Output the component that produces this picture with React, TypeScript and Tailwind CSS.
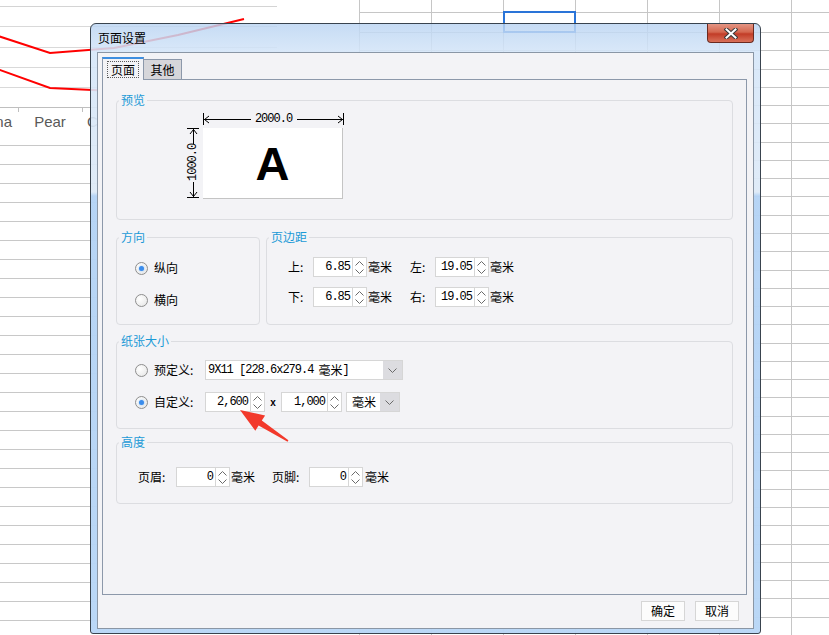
import React from 'react'

const mono = "font-['Liberation_Mono',monospace] tracking-[-1px]"

function Backdrop() {
  const chartRows = [26, 47, 67, 87]
  const leftRows = Array.from({ length: 26 }, (_, i) => 145 + i * 19)
  const sheetRows = [12, ...Array.from({ length: 34 }, (_, i) => Math.round(32 + i * 18.27))]
  const sheetCols = [359, 431, 503, 575, 647, 719, 791]
  return (
    <svg className="absolute inset-0" width="829" height="635">
      <line x1="0" x2="277" y1="6.5" y2="6.5" stroke="#d4d4d4" />
      {chartRows.map((y) => (
        <line key={y} x1="0" x2="277" y1={y + 0.5} y2={y + 0.5} stroke="#d9d9d9" />
      ))}
      <line x1="0" x2="277" y1="107.5" y2="107.5" stroke="#bfbfbf" />
      {[18, 82, 146, 210].map((x) => (
        <line key={x} x1={x + 0.5} x2={x + 0.5} y1="107" y2="112" stroke="#bfbfbf" />
      ))}
      {leftRows.map((y) => (
        <line key={y} x1="0" x2="359" y1={y + 0.5} y2={y + 0.5} stroke="#c8c8c8" />
      ))}
      {sheetRows.map((y) => (
        <line key={y} x1="359" x2="829" y1={y + 0.5} y2={y + 0.5} stroke="#c6c6c6" />
      ))}
      {sheetCols.map((x) => (
        <line key={x} x1={x + 0.5} x2={x + 0.5} y1="0" y2="635" stroke="#c6c6c6" />
      ))}
      <rect x="504" y="12" width="71" height="20" fill="none" stroke="#2a74d8" strokeWidth="2" />
      <polyline points="-14,32 50,53 114,48 178,35 244,19" fill="none" stroke="#f00" strokeWidth="2" />
      <polyline points="-14,65 50,88 114,91" fill="none" stroke="#f00" strokeWidth="2" />
      <g fontFamily="Liberation Sans, sans-serif" fontSize="15" fill="#595959">
        <text x="12" y="127" textAnchor="end">Banana</text>
        <text x="50" y="127" textAnchor="middle">Pear</text>
        <text x="87" y="127">Cherry</text>
      </g>
    </svg>
  )
}

function ChevUp() {
  return (
    <svg width="9" height="5" viewBox="0 0 9 5">
      <path d="M0.5 4.5 L4.5 0.5 L8.5 4.5" fill="none" stroke="#6a6a6a" />
    </svg>
  )
}

function ChevDown() {
  return (
    <svg width="9" height="5" viewBox="0 0 9 5">
      <path d="M0.5 0.5 L4.5 4.5 L8.5 0.5" fill="none" stroke="#6a6a6a" />
    </svg>
  )
}

function Spin({ value, w }: { value: string; w: string }) {
  return (
    <div className="flex h-[20px]">
      <div className={`${w} border border-[#d6d6d6] bg-white flex items-center justify-end pr-[2px] text-[12px] ${mono}`}>
        {value}
      </div>
      <div className="w-[14px] border border-l-0 border-[#d6d6d6] bg-white flex flex-col items-center justify-center gap-[3px]">
        <ChevUp />
        <ChevDown />
      </div>
    </div>
  )
}

function Radio({ checked }: { checked?: boolean }) {
  return (
    <span className="w-[13px] h-[13px] rounded-full border border-[#8e8e8e] bg-[radial-gradient(circle_at_35%_35%,#ffffff,#e4e4e4)] flex items-center justify-center shrink-0">
      {checked && <span className="w-[5px] h-[5px] rounded-full bg-[#3b8ceb] shadow-[0_0_2px_#7fb8f5]" />}
    </span>
  )
}

function Group({ title, className, children }: { title: string; className: string; children?: React.ReactNode }) {
  return (
    <fieldset className={`rounded-[4px] border border-[#dcdde1] ${className}`}>
      <legend className="ml-[2px] px-[2px] text-[12px] leading-[16px] text-[#1b9ad6]">{title}</legend>
      {children}
    </fieldset>
  )
}

function Preview() {
  return (
    <div className="ml-[70px] mt-[5px] flex flex-col">
      <div className="ml-[16px] flex h-[15px] items-start">
        <svg width="50" height="13">
          <line x1="0.5" x2="0.5" y1="0" y2="12" stroke="#000" />
          <line x1="1" x2="48" y1="6.5" y2="6.5" stroke="#000" />
          <path d="M6 3 L1.5 6.5 L6 10" fill="none" stroke="#000" />
        </svg>
        <span className={`w-[41px] text-center text-[12px] leading-[13px] ${mono}`}>2000.0</span>
        <svg width="50" height="13">
          <line x1="3" x2="49" y1="6.5" y2="6.5" stroke="#000" />
          <line x1="49.5" x2="49.5" y1="0" y2="12" stroke="#000" />
          <path d="M44 3 L48.5 6.5 L44 10" fill="none" stroke="#000" />
        </svg>
      </div>
      <div className="flex">
        <div className="w-[12px] h-[70px] mr-[4px] flex flex-col items-center">
          <svg width="12" height="17">
            <line x1="0" x2="12" y1="0.5" y2="0.5" stroke="#000" />
            <line x1="6.5" x2="6.5" y1="1" y2="16" stroke="#000" />
            <path d="M3 6 L6.5 1.5 L10 6" fill="none" stroke="#000" />
          </svg>
          <span className={`h-[36px] text-[12px] leading-[12px] text-center [writing-mode:vertical-rl] rotate-180 ${mono}`}>1000.0</span>
          <svg width="12" height="17">
            <line x1="6.5" x2="6.5" y1="1" y2="16" stroke="#000" />
            <path d="M3 11 L6.5 15.5 L10 11" fill="none" stroke="#000" />
            <line x1="0" x2="12" y1="16.5" y2="16.5" stroke="#000" />
          </svg>
        </div>
        <div className="w-[140px] h-[71px] bg-white border-r border-b border-[#c4c4c4] flex items-center justify-center">
          <span className="font-['Liberation_Sans',sans-serif] font-bold text-[47px] leading-none">A</span>
        </div>
      </div>
    </div>
  )
}

function Dialog() {
  return (
    <div className="absolute left-[90px] top-[23px] w-[671px] h-[611px] flex flex-col border border-[#39434e] rounded-t-[6px] rounded-b-[3px] bg-[linear-gradient(180deg,rgba(186,212,242,0.82)_0px,rgba(212,229,248,0.88)_28px,rgba(222,234,247,0.95)_168px,rgba(180,211,245,0.97)_172px,rgba(184,214,246,0.97)_100%)]">
      <div className="h-[28px] flex shrink-0">
        <div className="pl-[7px] flex items-center text-[12px]">页面设置</div>
        <div className="ml-auto mr-[6px] w-[47px] h-[19px] rounded-b-[4px] border border-t-0 border-[#6b2a20] bg-[linear-gradient(180deg,#e49584_0%,#d4674f_45%,#c23c27_55%,#d9715a_100%)] flex items-center justify-center">
          <svg width="14" height="11" viewBox="0 0 14 11">
            <path d="M2.5 1.5 L11.5 9.5 M11.5 1.5 L2.5 9.5" stroke="#3a3a3a" strokeWidth="4" strokeLinecap="square" />
            <path d="M2.5 1.5 L11.5 9.5 M11.5 1.5 L2.5 9.5" stroke="#fff" strokeWidth="2" strokeLinecap="square" />
          </svg>
        </div>
      </div>
      <div className="ml-[6px] w-[657px] h-[577px] border border-[#8a96a5] bg-[#f3f3f6] flex flex-col pl-[4px] pt-[4px]">
        <div className="flex items-end h-[22px]">
          <div className="relative z-10 -mb-px h-[23px] w-[42px] border border-b-0 border-[#8c98aa] border-t-2 border-t-[#3d8ee0] bg-[#f3f3f6] flex items-center justify-center">
            <span className="border border-dotted border-[#5a5a5a] px-[3px] leading-[15px] text-[12px]">页面</span>
          </div>
          <div className="h-[20px] w-[38px] border border-b-0 border-l-0 border-[#8c98aa] bg-[#d6d6da] flex items-center justify-center text-[12px]">
            其他
          </div>
        </div>
        <div className="w-[645px] h-[516px] border border-[#8c98aa] bg-[#f3f3f6] px-[13px] flex flex-col">
          <Group title="预览" className="mt-[12px] h-[128px]">
            <Preview />
          </Group>
          <div className="mt-[9px] flex gap-[6px]">
            <Group title="方向" className="w-[144px] h-[96px]">
              <div className="pl-[18px] pt-[13px] flex flex-col gap-[12px]">
                <div className="h-[20px] flex items-center gap-[6px]">
                  <Radio checked />
                  <span>纵向</span>
                </div>
                <div className="h-[20px] flex items-center gap-[6px]">
                  <Radio />
                  <span>横向</span>
                </div>
              </div>
            </Group>
            <Group title="页边距" className="flex-1 h-[96px]">
              <div className="pl-[21px] pt-[12px] flex flex-col gap-[10px]">
                <div className="flex items-center">
                  <span className="w-[25px]">上:</span>
                  <Spin value="6.85" w="w-[40px]" />
                  <span className="ml-[1px] w-[26px]">毫米</span>
                  <span className="ml-[16px] w-[25px]">左:</span>
                  <Spin value="19.05" w="w-[40px]" />
                  <span className="ml-[1px]">毫米</span>
                </div>
                <div className="flex items-center">
                  <span className="w-[25px]">下:</span>
                  <Spin value="6.85" w="w-[40px]" />
                  <span className="ml-[1px] w-[26px]">毫米</span>
                  <span className="ml-[16px] w-[25px]">右:</span>
                  <Spin value="19.05" w="w-[40px]" />
                  <span className="ml-[1px]">毫米</span>
                </div>
              </div>
            </Group>
          </div>
          <Group title="纸张大小" className="mt-[8px] h-[96px]">
            <div className="pl-[18px] pt-[11px] flex flex-col gap-[12px]">
              <div className="h-[20px] flex items-center">
                <Radio />
                <span className="ml-[6px] w-[51px]">预定义:</span>
                <div className="w-[198px] h-[20px] border border-[#d6d6d6] bg-white flex">
                  <span className={`flex-1 pl-[2px] flex items-center text-[12px] ${mono}`}>
                    9X11 [228.6x279.4 <span className="font-['Noto_Sans_CJK_SC',sans-serif] tracking-normal ml-[5px]">毫米</span>]
                  </span>
                  <span className="w-[19px] bg-[#dcdce0] flex items-center justify-center">
                    <ChevDown />
                  </span>
                </div>
              </div>
              <div className="h-[20px] flex items-center">
                <Radio checked />
                <span className="ml-[6px] w-[51px]">自定义:</span>
                <Spin value="2,600" w="w-[46px]" />
                <span className="w-[16px] text-center text-[10px] font-bold font-['Liberation_Sans',sans-serif]">x</span>
                <Spin value="1,000" w="w-[47px]" />
                <div className="ml-[4px] w-[54px] h-[20px] border border-[#d6d6d6] bg-white flex">
                  <span className="flex-1 pl-[5px] flex items-center">毫米</span>
                  <span className="w-[19px] bg-[#dcdce0] flex items-center justify-center">
                    <ChevDown />
                  </span>
                </div>
              </div>
            </div>
          </Group>
          <Group title="高度" className="mt-[5px] h-[70px]">
            <div className="pl-[21px] pt-[17px] flex items-center">
              <span className="w-[38px]">页眉:</span>
              <Spin value="0" w="w-[40px]" />
              <span className="ml-[1px] w-[26px]">毫米</span>
              <span className="ml-[15px] w-[37px]">页脚:</span>
              <Spin value="0" w="w-[40px]" />
              <span className="ml-[2px]">毫米</span>
            </div>
          </Group>
        </div>
        <div className="mt-[6px] pr-[14px] flex justify-end gap-[10px]">
          <button className="w-[44px] h-[20px] border border-[#d6d6d6] bg-[#fcfcfc] text-[12px] leading-none">确定</button>
          <button className="w-[44px] h-[20px] border border-[#d6d6d6] bg-[#fcfcfc] text-[12px] leading-none">取消</button>
        </div>
      </div>
    </div>
  )
}

function RedArrow() {
  return (
    <svg className="absolute inset-0 pointer-events-none" width="829" height="635">
      <polygon
        points="240,410 265.1,415.5 261.8,420.6 288.4,440.3 287.6,441.7 258.6,425.6 255.3,430.7"
        fill="#f2392b"
      />
    </svg>
  )
}

export default function App() {
  return (
    <div className="relative w-[829px] h-[635px] overflow-hidden bg-white font-['Noto_Sans_CJK_SC',sans-serif] text-[12px] text-black">
      <Backdrop />
      <Dialog />
      <RedArrow />
    </div>
  )
}
